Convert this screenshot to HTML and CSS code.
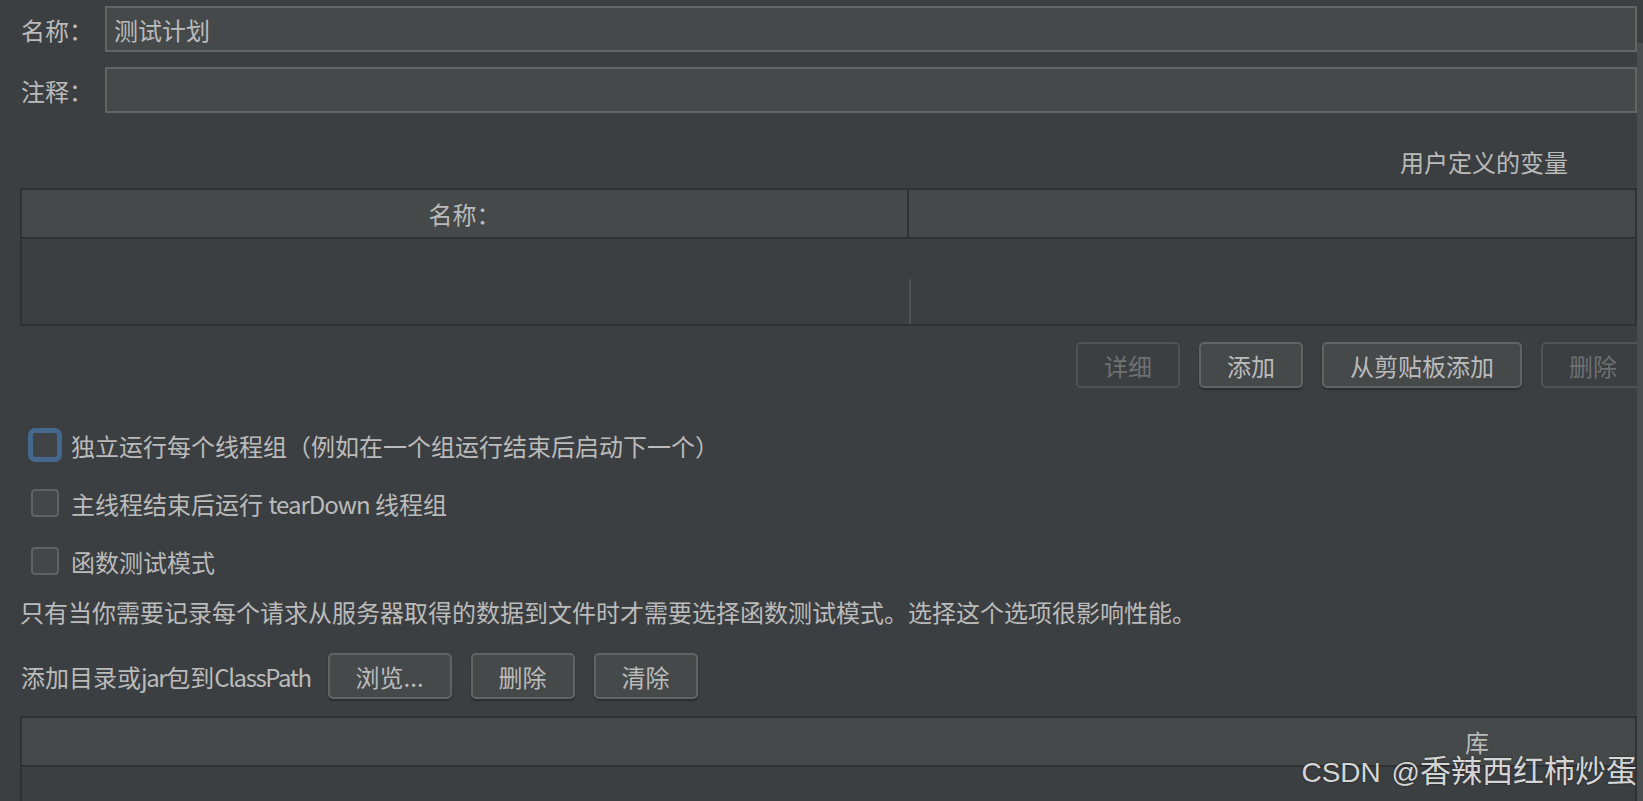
FILE: index.html
```html
<!DOCTYPE html>
<html lang="zh-CN">
<head>
<meta charset="utf-8">
<title>测试计划</title>
<link rel="stylesheet" href="styles.css">
</head>
<body>
<div class="app">
  <div class="main">
    <div class="field-row">
      <label class="field-label">名称：</label>
      <input class="field-input" type="text" value="测试计划">
    </div>
    <div class="field-row">
      <label class="field-label">注释：</label>
      <input class="field-input" type="text" value="">
    </div>

    <div class="section-title">用户定义的变量</div>
    <div class="table">
      <div class="thead">
        <div class="th th-first">名称：</div>
        <div class="th"></div>
      </div>
      <div class="tbody">
        <div class="td td-first"></div>
        <div class="td"><div class="td-line"></div></div>
      </div>
    </div>

    <div class="btn-row">
      <button class="btn disabled">详细</button>
      <button class="btn">添加</button>
      <button class="btn">从剪贴板添加</button>
      <button class="btn disabled">删除</button>
    </div>

    <div class="checks">
      <div class="check-row"><span class="checkbox focused"></span><span>独立运行每个线程组（例如在一个组运行结束后启动下一个）</span></div>
      <div class="check-row"><span class="checkbox"></span><span>主线程结束后运行 <span class="lat">tearDown</span> 线程组</span></div>
      <div class="check-row"><span class="checkbox"></span><span>函数测试模式</span></div>
    </div>

    <div class="note">只有当你需要记录每个请求从服务器取得的数据到文件时才需要选择函数测试模式。选择这个选项很影响性能。</div>

    <div class="cp-row">
      <span class="cp-label">添加目录或<span class="lat">jar</span>包到<span class="lat">ClassPath</span></span>
      <button class="btn">浏览...</button>
      <button class="btn">删除</button>
      <button class="btn">清除</button>
    </div>

    <div class="table table-lib">
      <div class="thead thead-lib">
        <div class="th th-lib">库</div>
      </div>
      <div class="tbody tbody-lib"></div>
    </div>
  </div>
  <div class="vscroll"><div class="vscroll-thumb"></div></div>
  <div class="watermark"><span class="wm-latin">CSDN @</span><span class="wm-cjk">香辣西红柿炒蛋</span></div>
</div>
</body>
</html>
```

FILE: styles.css
```css
* { box-sizing: border-box; }

html, body {
  margin: 0;
  height: 100%;
}

body {
  background: #3c3f41;
  color: #bbbbbb;
  font-family: "Noto Sans CJK SC", "Noto Sans", sans-serif;
  font-size: 24px;
  overflow: hidden;
}

.app {
  position: relative;
  display: flex;
  height: 801px;
}

.main {
  flex: 1;
  min-width: 0;
  padding: 6px 0 0 20px;
  overflow: hidden;
}

.vscroll {
  width: 6px;
  flex: none;
  padding-top: 43px;
}

.vscroll-thumb {
  height: 100%;
  background: #4b4e50;
}

.lat { letter-spacing: -1px; }

/* name / comment rows */
.field-row {
  display: flex;
  align-items: center;
  height: 46px;
}

.field-row + .field-row { margin-top: 15px; }

.field-label {
  width: 85px;
  flex: none;
  padding-left: 1px;
}

.field-input {
  flex: 1;
  min-width: 0;
  height: 46px;
  margin: 0;
  padding: 0 7px;
  background: #45494a;
  border: 2px solid #646464;
  border-radius: 0;
  color: #bbbbbb;
  font: inherit;
  outline: none;
}

/* titled table */
.section-title {
  margin-top: 34px;
  height: 30px;
  line-height: 30px;
  text-align: right;
  padding-right: 69px;
}

.table {
  margin-top: 11px;
  border: 2px solid #2f3133;
}

.thead {
  display: grid;
  grid-template-columns: 887px 1fr;
  height: 49px;
  background: #45494a;
  border-bottom: 2px solid #2f3133;
}

.th {
  display: flex;
  align-items: center;
  justify-content: center;
}

.th-first { border-right: 2px solid #2f3133; }

.tbody {
  display: grid;
  grid-template-columns: 887px 1fr;
  height: 85px;
}

.td-line {
  margin-top: 40px;
  height: calc(100% - 40px);
  border-left: 2px solid #4e5153;
}

/* buttons */
.btn-row {
  display: flex;
  justify-content: flex-end;
  gap: 19px;
  margin-top: 16px;
  margin-right: -8px;
}

.btn {
  height: 46px;
  margin: 0;
  padding: 0 26px;
  display: flex;
  align-items: center;
  justify-content: center;
  flex: none;
  background: #45494a;
  border: 2px solid #616364;
  border-radius: 5px;
  box-shadow: 0 2px 2px rgba(0, 0, 0, 0.3);
  color: #bbbbbb;
  font: inherit;
  white-space: nowrap;
}

.btn.disabled {
  background: #3c3f41;
  border-color: #505254;
  color: #6e7072;
  box-shadow: none;
}

/* checkboxes */
.checks { margin-top: 28px; }

.check-row {
  display: flex;
  align-items: center;
  height: 58px;
  padding-left: 11px;
}

.checkbox {
  width: 28px;
  height: 28px;
  flex: none;
  margin-right: 12px;
  background: #43474a;
  border: 2px solid #5f6162;
  border-radius: 4px;
}

.checkbox.focused {
  background: #404346;
  border-color: #46698f;
  border-radius: 4px;
  box-shadow: 0 0 0 3px #44678e;
}

.note {
  margin-top: 7px;
  height: 30px;
  line-height: 30px;
  white-space: nowrap;
}

.cp-row {
  display: flex;
  align-items: center;
  gap: 19px;
  margin-top: 26px;
  height: 46px;
}

.cp-label {
  margin-right: -2px;
  padding-left: 1px;
}

.cp-label .lat { letter-spacing: -1.4px; }

.table-lib { margin-top: 17px; }

.thead-lib {
  display: flex;
  justify-content: flex-end;
  padding-right: 146px;
}

.tbody-lib { height: 200px; }

.watermark {
  position: absolute;
  right: 6px;
  bottom: 8px;
  color: rgba(232, 232, 232, 0.92);
  text-shadow: 0 0 2px rgba(0, 0, 0, 0.6);
  white-space: nowrap;
  line-height: 40px;
}

.wm-latin {
  font-family: "Liberation Sans", "Noto Sans", sans-serif;
  font-size: 28px;
  word-spacing: 3px;
}

.wm-cjk {
  font-family: "Noto Sans CJK SC", sans-serif;
  font-size: 31px;
}
```
